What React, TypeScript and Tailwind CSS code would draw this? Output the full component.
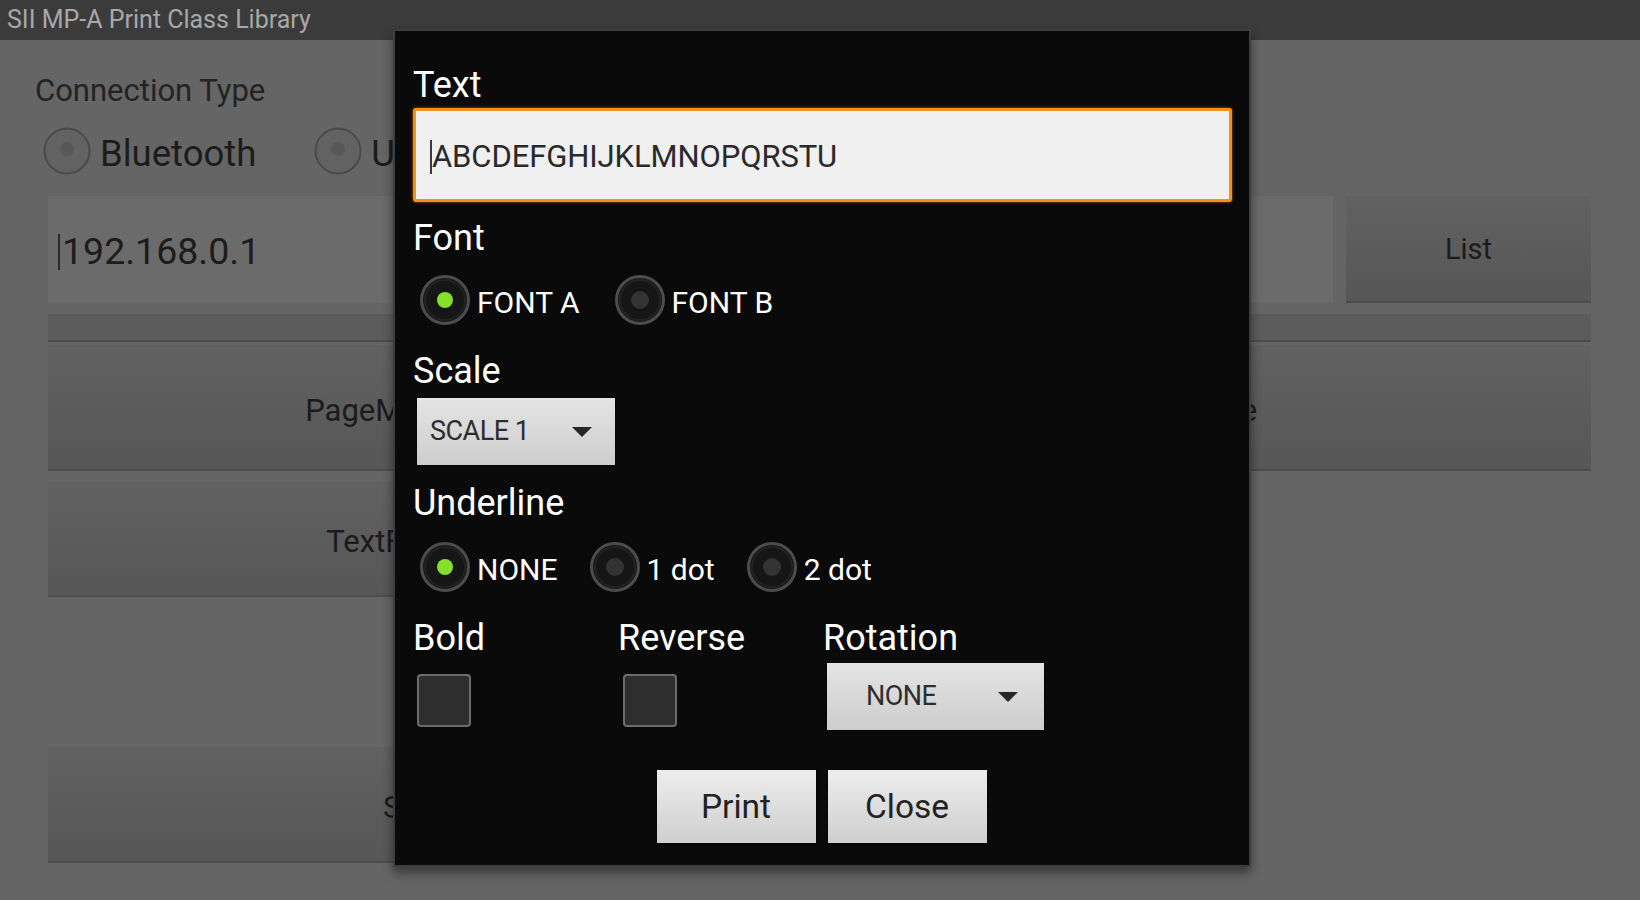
import React from 'react'

interface RadioProps {
  label: string
  checked?: boolean
}

function Radio({ label, checked }: RadioProps): JSX.Element {
  return (
    <div className="flex items-center">
      <svg width="52" height="52" viewBox="0 0 52 52" className="shrink-0">
        <circle cx="26" cy="26" r="23.5" fill="#161616" stroke="#4c4c4c" strokeWidth="3" />
        <circle cx="26" cy="26" r="20" fill="none" stroke="#232323" strokeWidth="2" />
        {checked ? (
          <circle cx="26" cy="26" r="8" fill="#86e02a" />
        ) : (
          <circle cx="26" cy="26" r="9" fill="#333333" />
        )}
      </svg>
      <span className="ml-[6px] pt-[6px] text-[30px] leading-none text-white">{label}</span>
    </div>
  )
}

function BgRadio({ label }: { label: string }): JSX.Element {
  return (
    <div className="flex items-center">
      <svg width="48" height="48" viewBox="0 0 48 48" className="shrink-0">
        <circle cx="24" cy="24" r="22.5" fill="#626262" stroke="#4a4a4a" strokeWidth="2" />
        <circle cx="24" cy="22" r="7" fill="#585858" />
      </svg>
      <span className="ml-[9px] pt-[6px] text-[36.5px] leading-none text-[#1c1c1c]">{label}</span>
    </div>
  )
}

function Spinner({ value, className }: { value: string; className: string }): JSX.Element {
  return (
    <div
      className={`flex h-[67px] items-center justify-between bg-gradient-to-b from-[#e4e4e4] to-[#cdcdcd] shadow-[0_1px_2px_rgba(0,0,0,0.6)] ${className}`}
    >
      <span className="text-[27px] leading-none tracking-[-0.5px] text-[#2e2e2e]">{value}</span>
      <svg width="20" height="10" viewBox="0 0 20 10">
        <polygon points="0,0 20,0 10,10" fill="#262626" />
      </svg>
    </div>
  )
}

function BgButton({ label, className }: { label: string; className: string }): JSX.Element {
  return (
    <div
      className={`flex items-center justify-center border-b-2 border-[#4c4c4c] bg-gradient-to-b from-[#616161] to-[#575757] pt-[8px] text-[31px] text-[#1b1b1b] ${className}`}
    >
      {label}
    </div>
  )
}

export default function App(): JSX.Element {
  return (
    <div className="relative h-[900px] w-[1640px] overflow-hidden bg-[#656565] font-['Roboto',sans-serif]">
      <header className="flex h-[40px] items-center bg-[#3b3b3b] pl-[7px] text-[25px] text-[#a8a8a8]">
        SII MP-A Print Class Library
      </header>

      <main className="pl-[35px] pr-[49px]">
        <div className="mt-[33px] text-[31px] leading-[36px] text-[#232323]">Connection Type</div>
        <div className="mt-[18px] ml-[8px] flex items-center gap-[58px]">
          <BgRadio label="Bluetooth" />
          <BgRadio label="USB" />
        </div>

        <div className="mt-[21px] ml-[13px] flex h-[107px] gap-[13px]">
          <div className="flex grow items-center bg-[#6b6b6b] pl-[10px] pt-[4px]">
            <span className="mr-[2px] h-[36px] w-[2px] bg-[#2a2a2a]" />
            <span className="text-[37.5px] text-[#1c1c1c]">192.168.0.1</span>
          </div>
          <BgButton label="List" className="w-[245px] !pt-[2px] !text-[29px]" />
        </div>

        <div className="mt-[11px] ml-[13px] h-[28px] border-b-2 border-[#4c4c4c] bg-[#5c5c5c]" />

        <div className="mt-[3px] ml-[13px] flex h-[126px] gap-[8px]">
          <BgButton label="PageModeSample" className="w-[767px]" />
          <BgButton label="LogFile" className="grow" />
        </div>
        <div className="mt-[11px] ml-[13px] flex h-[115px]">
          <BgButton label="TextFormatting" className="w-[767px]" />
        </div>
        <div className="mt-[150px] ml-[13px] flex h-[116px]">
          <BgButton label="Setting" className="w-[767px]" />
        </div>
      </main>

      {/* print dialog */}
      <div className="absolute left-[393px] top-[29px] flex h-[838px] w-[858px] flex-col border-2 border-[#3e3e3e] bg-[#0a0a0a] pl-[18px] pr-[17px] pt-[33px] shadow-[0_6px_10px_rgba(0,0,0,0.45)]">
        <div className="text-[36px] leading-[42px] text-white">Text</div>
        <div className="mt-[2px] flex h-[94px] items-center rounded-[3px] border-[3px] border-[#f2901a] bg-[#f0f0f0] pl-[14px] pt-[4px] shadow-[0_0_3px_rgba(242,144,26,0.7)]">
          <span className="h-[34px] w-[2px] bg-[#3a3a3a]" />
          <span className="text-[31px] tracking-[-0.1px] text-[#2a2a2a]">ABCDEFGHIJKLMNOPQRSTU</span>
        </div>

        <div className="mt-[15px] text-[36px] leading-[42px] text-white">Font</div>
        <div className="mt-[14px] ml-[6px] flex h-[54px] items-center gap-[34px]">
          <Radio label="FONT A" checked />
          <Radio label="FONT B" />
        </div>

        <div className="mt-[23px] text-[36px] leading-[42px] text-white">Scale</div>
        <Spinner value="SCALE 1" className="mt-[6px] ml-[4px] w-[198px] pl-[13px] pr-[23px]" />

        <div className="mt-[17px] text-[36px] leading-[42px] text-white">Underline</div>
        <div className="mt-[16px] ml-[6px] flex h-[54px] items-center gap-[31px]">
          <Radio label="NONE" checked />
          <Radio label="1 dot" />
          <Radio label="2 dot" />
        </div>

        <div className="mt-[23px] flex">
          <div className="flex w-[205px] flex-col">
            <span className="text-[36px] leading-[42px] text-white">Bold</span>
            <span className="mt-[15px] ml-[4px] h-[53px] w-[54px] rounded-[4px] border-2 border-[#6c6c6c] bg-[#2e2e2e]" />
          </div>
          <div className="flex w-[205px] flex-col">
            <span className="text-[36px] leading-[42px] text-white">Reverse</span>
            <span className="mt-[15px] ml-[5px] h-[53px] w-[54px] rounded-[4px] border-2 border-[#6c6c6c] bg-[#2e2e2e]" />
          </div>
          <div className="flex flex-col">
            <span className="text-[36px] leading-[42px] text-white">Rotation</span>
            <Spinner value="NONE" className="mt-[4px] ml-[4px] w-[217px] pl-[39px] pr-[26px]" />
          </div>
        </div>

        <div className="mt-[40px] flex justify-center gap-[12px] pr-[2px]">
          {['Print', 'Close'].map((label) => (
            <div
              key={label}
              className="flex h-[73px] w-[159px] items-center justify-center bg-gradient-to-b from-[#ededed] to-[#cfcfcf] pt-[2px] text-[33.5px] text-[#222] shadow-[0_1px_2px_rgba(0,0,0,0.6)]"
            >
              {label}
            </div>
          ))}
        </div>
      </div>
    </div>
  )
}
